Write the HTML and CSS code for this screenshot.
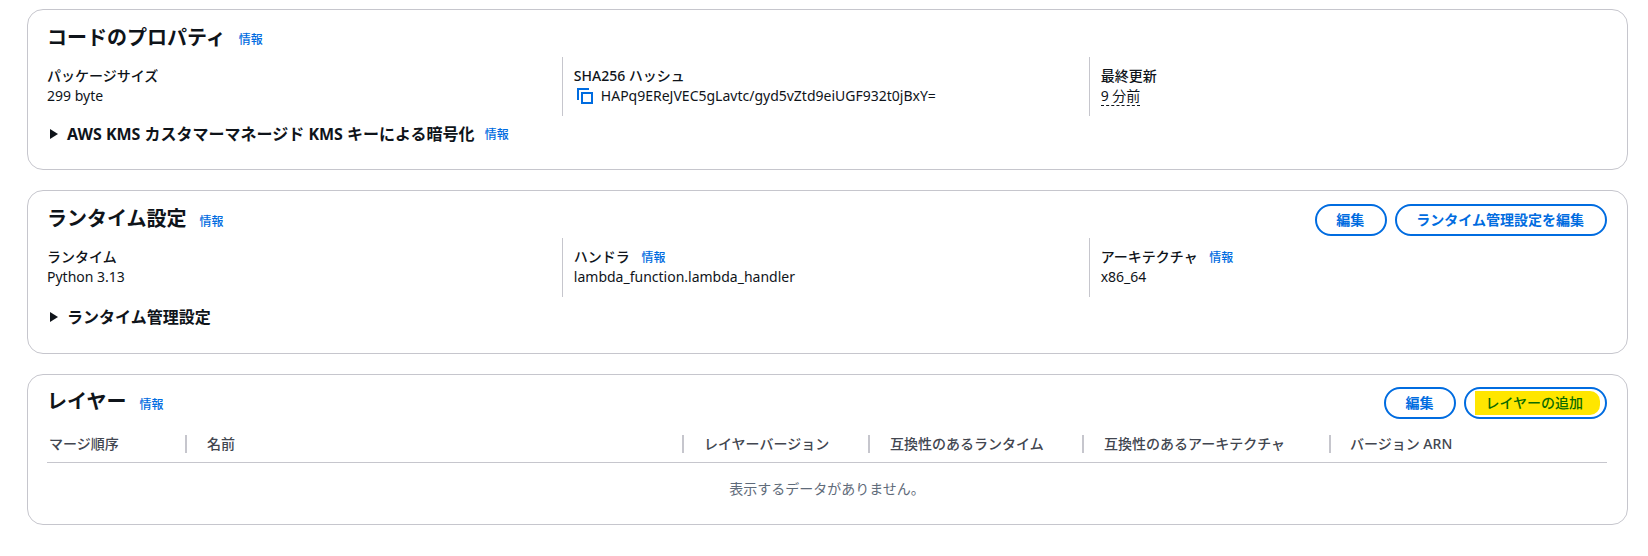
FILE: index.html
```html
<!DOCTYPE html>
<html lang="ja">
<head>
<meta charset="utf-8">
<title>Lambda 関数</title>
<link rel="stylesheet" href="styles.css">
</head>
<body>
<main class="page">
  <section class="card card-code">
    <header class="card-head">
      <h2 class="title">コードのプロパティ</h2>
      <a class="info info-title">情報</a>
    </header>
    <div class="cols">
      <div class="col">
        <div class="label">パッケージサイズ</div>
        <div class="value">299 byte</div>
      </div>
      <div class="col">
        <div class="label">SHA256 ハッシュ</div>
        <div class="value hash">
          <svg class="copy" viewBox="0 0 16 16" width="16" height="16" aria-hidden="true"><path d="M1 12V1h11" fill="none" stroke="#006ce0" stroke-width="2"/><rect x="5" y="5" width="10" height="10" fill="none" stroke="#006ce0" stroke-width="2"/></svg>
          <span>HAPq9EReJVEC5gLavtc/gyd5vZtd9eiUGF932t0jBxY=</span>
        </div>
      </div>
      <div class="col">
        <div class="label">最終更新</div>
        <div class="value"><span class="dashed">9 分前</span></div>
      </div>
    </div>
    <div class="expand">
      <span class="caret"></span>
      <span class="expand-text">AWS KMS カスタマーマネージド KMS キーによる暗号化</span>
      <a class="info info-expand">情報</a>
    </div>
  </section>

  <section class="card card-runtime">
    <header class="card-head">
      <h2 class="title">ランタイム設定</h2>
      <a class="info info-title">情報</a>
      <div class="actions">
        <button class="btn">編集</button>
        <button class="btn">ランタイム管理設定を編集</button>
      </div>
    </header>
    <div class="cols">
      <div class="col">
        <div class="label">ランタイム</div>
        <div class="value">Python 3.13</div>
      </div>
      <div class="col">
        <div class="label">ハンドラ <a class="info info-label">情報</a></div>
        <div class="value">lambda_function.lambda_handler</div>
      </div>
      <div class="col">
        <div class="label">アーキテクチャ <a class="info info-label">情報</a></div>
        <div class="value">x86_64</div>
      </div>
    </div>
    <div class="expand">
      <span class="caret"></span>
      <span class="expand-text">ランタイム管理設定</span>
    </div>
  </section>

  <section class="card card-layers">
    <header class="card-head">
      <h2 class="title">レイヤー</h2>
      <a class="info info-title">情報</a>
      <div class="actions">
        <button class="btn">編集</button>
        <button class="btn btn-marked"><span class="marker">レイヤーの追加</span></button>
      </div>
    </header>
    <div class="thead">
      <div class="th th-order">マージ順序</div>
      <div class="th th-name">名前</div>
      <div class="th th-ver">レイヤーバージョン</div>
      <div class="th th-rt">互換性のあるランタイム</div>
      <div class="th th-arch">互換性のあるアーキテクチャ</div>
      <div class="th th-arn">バージョン ARN</div>
    </div>
    <div class="empty">表示するデータがありません。</div>
  </section>
</main>
</body>
</html>
```
FILE: styles.css
```css
* { box-sizing: border-box; }

html, body {
  margin: 0;
  background: #fff;
}

body {
  font-family: "Noto Sans", "Noto Sans CJK JP", sans-serif;
  font-size: 14px;
  line-height: 20px;
  color: #0f141a;
}

.page {
  display: flex;
  flex-direction: column;
  gap: 20px;
  padding: 9px 20px 0 27px;
}

.card {
  border: 1px solid #c6c6cd;
  border-radius: 16px;
  background: #fff;
  padding: 0 20px 0 19px;
}

.card-code { height: 161px; }
.card-runtime { height: 164px; }
.card-layers { height: 151px; }

.card-head {
  display: flex;
  align-items: center;
  height: 32px;
  margin-top: 12px;
}

.card-runtime .card-head { margin-top: 13px; }
.card-layers .card-head { margin-top: 12px; }

.title {
  margin: 0;
  font-size: 20px;
  line-height: 24px;
  font-weight: 700;
}

.card-runtime .title,
.card-layers .title { margin-bottom: 2px; }

.info {
  color: #006ce0;
  font-size: 12px;
  font-weight: 500;
  line-height: 16px;
}

.info-title { margin: 3px 0 0 13px; }
.info-expand { margin: 2px 0 0 10px; }
.info-label { margin-left: 8px; }

.actions {
  display: flex;
  gap: 8px;
  margin-left: auto;
}

.btn {
  height: 32px;
  padding: 0 21px 0 19px;
  border: 2px solid #006ce0;
  border-radius: 20px;
  background: #fff;
  color: #006ce0;
  font: 700 14px/20px "Noto Sans", "Noto Sans CJK JP", sans-serif;
}

.btn-marked { padding: 0 5px 0 9px; }

.marker {
  display: block;
  padding: 2px 17px 2px 10px;
  background: #ffe600;
  border-radius: 0 10px 10px 0;
  color: #0b6b00;
  font-weight: 500;
}

.cols {
  display: grid;
  grid-template-columns: repeat(3, 1fr);
  column-gap: 20.5px;
  margin-top: 3px;
  height: 59px;
}

.card-runtime .cols { margin-top: 2px; }

.col {
  padding-top: 9px;
}

.col + .col {
  border-left: 1px solid #c6c6cd;
  margin-left: -12px;
  padding-left: 11px;
}

.label {
  font-weight: 500;
  font-size: 14px;
  line-height: 20px;
}

.value { line-height: 20px; }

.hash {
  display: flex;
  align-items: center;
  gap: 8px;
  margin-left: 3px;
}

.copy { flex: none; }

.dashed {
  border-bottom: 1px dashed #0f141a;
}

.expand {
  display: flex;
  align-items: center;
  margin-top: 8px;
  height: 20px;
}

.caret {
  width: 0;
  height: 0;
  margin: 0 9px 0 3px;
  border-left: 8px solid #0f141a;
  border-top: 5px solid transparent;
  border-bottom: 5px solid transparent;
}

.expand-text {
  font-size: 16px;
  font-weight: 700;
}

.card-runtime .expand { margin-top: 10px; }

.thead {
  display: grid;
  grid-template-columns: 138px 497px 186px 214px 247px 1fr;
  align-items: center;
  height: 37px;
  margin-top: 7px;
  border-bottom: 1px solid #c6c6cd;
  color: #424650;
  font-weight: 500;
}

.th {
  position: relative;
  padding-left: 22px;
  line-height: 20px;
}

.th-order { padding-left: 2px; }
.th-arn { padding-left: 21px; }

.th + .th::before {
  content: "";
  position: absolute;
  left: 0;
  top: 1px;
  bottom: 1px;
  width: 2px;
  background: #c6c6cd;
}

.empty {
  margin-top: 16px;
  text-align: center;
  color: #5f6b7a;
}
```
